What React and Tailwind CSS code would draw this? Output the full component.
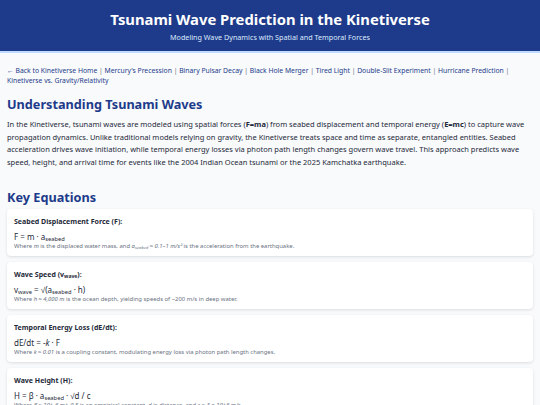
import React from "react";

const links = [
  "← Back to Kinetiverse Home",
  "Mercury's Precession",
  "Binary Pulsar Decay",
  "Black Hole Merger",
  "Tired Light",
  "Double-Slit Experiment",
  "Hurricane Prediction",
  "Kinetiverse vs. Gravity/Relativity",
];

// keep subscripts from stretching the line box
const Sub = ({ children }) => <span className="relative top-[0.25em] text-[0.72em] leading-none">{children}</span>;

const EquationCard = ({ title, formula, children }) => (
  <div className="bg-white rounded-[4px] shadow-[0_1px_3px_rgba(0,0,0,0.12)] px-[7px] pt-[8px] pb-[5px]">
    <h3 className="text-[7px] leading-[10px] font-bold text-gray-800">{title}</h3>
    <div className="mt-[5px] text-[8px] leading-[10px] text-gray-800">{formula}</div>
    <p className="text-[5.9px] leading-[9px] text-gray-500">{children}</p>
  </div>
);

export default function App() {
  return (
    <div className="min-h-[405px] bg-[#f8fafc] font-['Noto_Sans',sans-serif]">
      <header className="bg-[#1e3a8a] border-b-2 border-[#bfdbfe] h-[53px] flex flex-col items-center justify-center text-white">
        <h1 className="text-[14.8px] leading-[19px] font-bold">Tsunami Wave Prediction in the Kinetiverse</h1>
        <p className="text-[7.2px] leading-[10px] text-blue-100 mt-[3px]">
          Modeling Wave Dynamics with Spatial and Temporal Forces
        </p>
      </header>

      <main className="px-[7px] pt-[13px]">
        <nav className="text-[6.8px] leading-[10px] text-[#1e3a8a]">
          {links.map((l, i) => (
            <React.Fragment key={l}>
              <a href="#" className="hover:underline">{l}</a>
              {i < links.length - 1 && <span className="text-gray-500"> | </span>}
            </React.Fragment>
          ))}
        </nav>

        <h2 className="mt-[10px] text-[12.7px] leading-[17px] font-bold text-[#1e3a8a]">Understanding Tsunami Waves</h2>
        <p className="mt-[5px] text-[7.5px] leading-[12.7px] text-gray-800">
          In the Kinetiverse, tsunami waves are modeled using spatial forces (<strong>F=ma</strong>) from seabed
          displacement and temporal energy (<strong>E=mc</strong>) to capture wave propagation dynamics. Unlike
          traditional models relying on gravity, the Kinetiverse treats space and time as separate, entangled
          entities. Seabed acceleration drives wave initiation, while temporal energy losses via photon path length
          changes govern wave travel. This approach predicts wave speed, height, and arrival time for events like the
          2004 Indian Ocean tsunami or the 2025 Kamchatka earthquake.
        </p>

        <h2 className="mt-[20px] text-[12.7px] leading-[17px] font-bold text-[#1e3a8a]">Key Equations</h2>
        <div className="mt-[3px] flex flex-col gap-[6px]">
          <EquationCard title="Seabed Displacement Force (F):" formula={<>F = m · a<Sub>seabed</Sub></>}>
            Where <i>m</i> is the displaced water mass, and <i>a<Sub>seabed</Sub> ≈ 0.1–1 m/s²</i> is the acceleration
            from the earthquake.
          </EquationCard>
          <EquationCard title={<>Wave Speed (v<Sub>wave</Sub>):</>} formula={<>v<Sub>wave</Sub> = √(a<Sub>seabed</Sub> · h)</>}>
            Where <i>h ≈ 4,000 m</i> is the ocean depth, yielding speeds of ~200 m/s in deep water.
          </EquationCard>
          <EquationCard title="Temporal Energy Loss (dE/dt):" formula={<>dE/dt = -<i>k</i> · F</>}>
            Where <i>k ≈ 0.01</i> is a coupling constant, modulating energy loss via photon path length changes.
          </EquationCard>
          <EquationCard title="Wave Height (H):" formula={<>H = β · a<Sub>seabed</Sub> · √d / c</>}>
            Where <i>β ≈ 10^-6 m^-0.5</i> is an empirical constant, <i>d</i> is distance, and <i>c ≈ 3 × 10^8 m/s</i>.
          </EquationCard>
        </div>
      </main>
    </div>
  );
}
